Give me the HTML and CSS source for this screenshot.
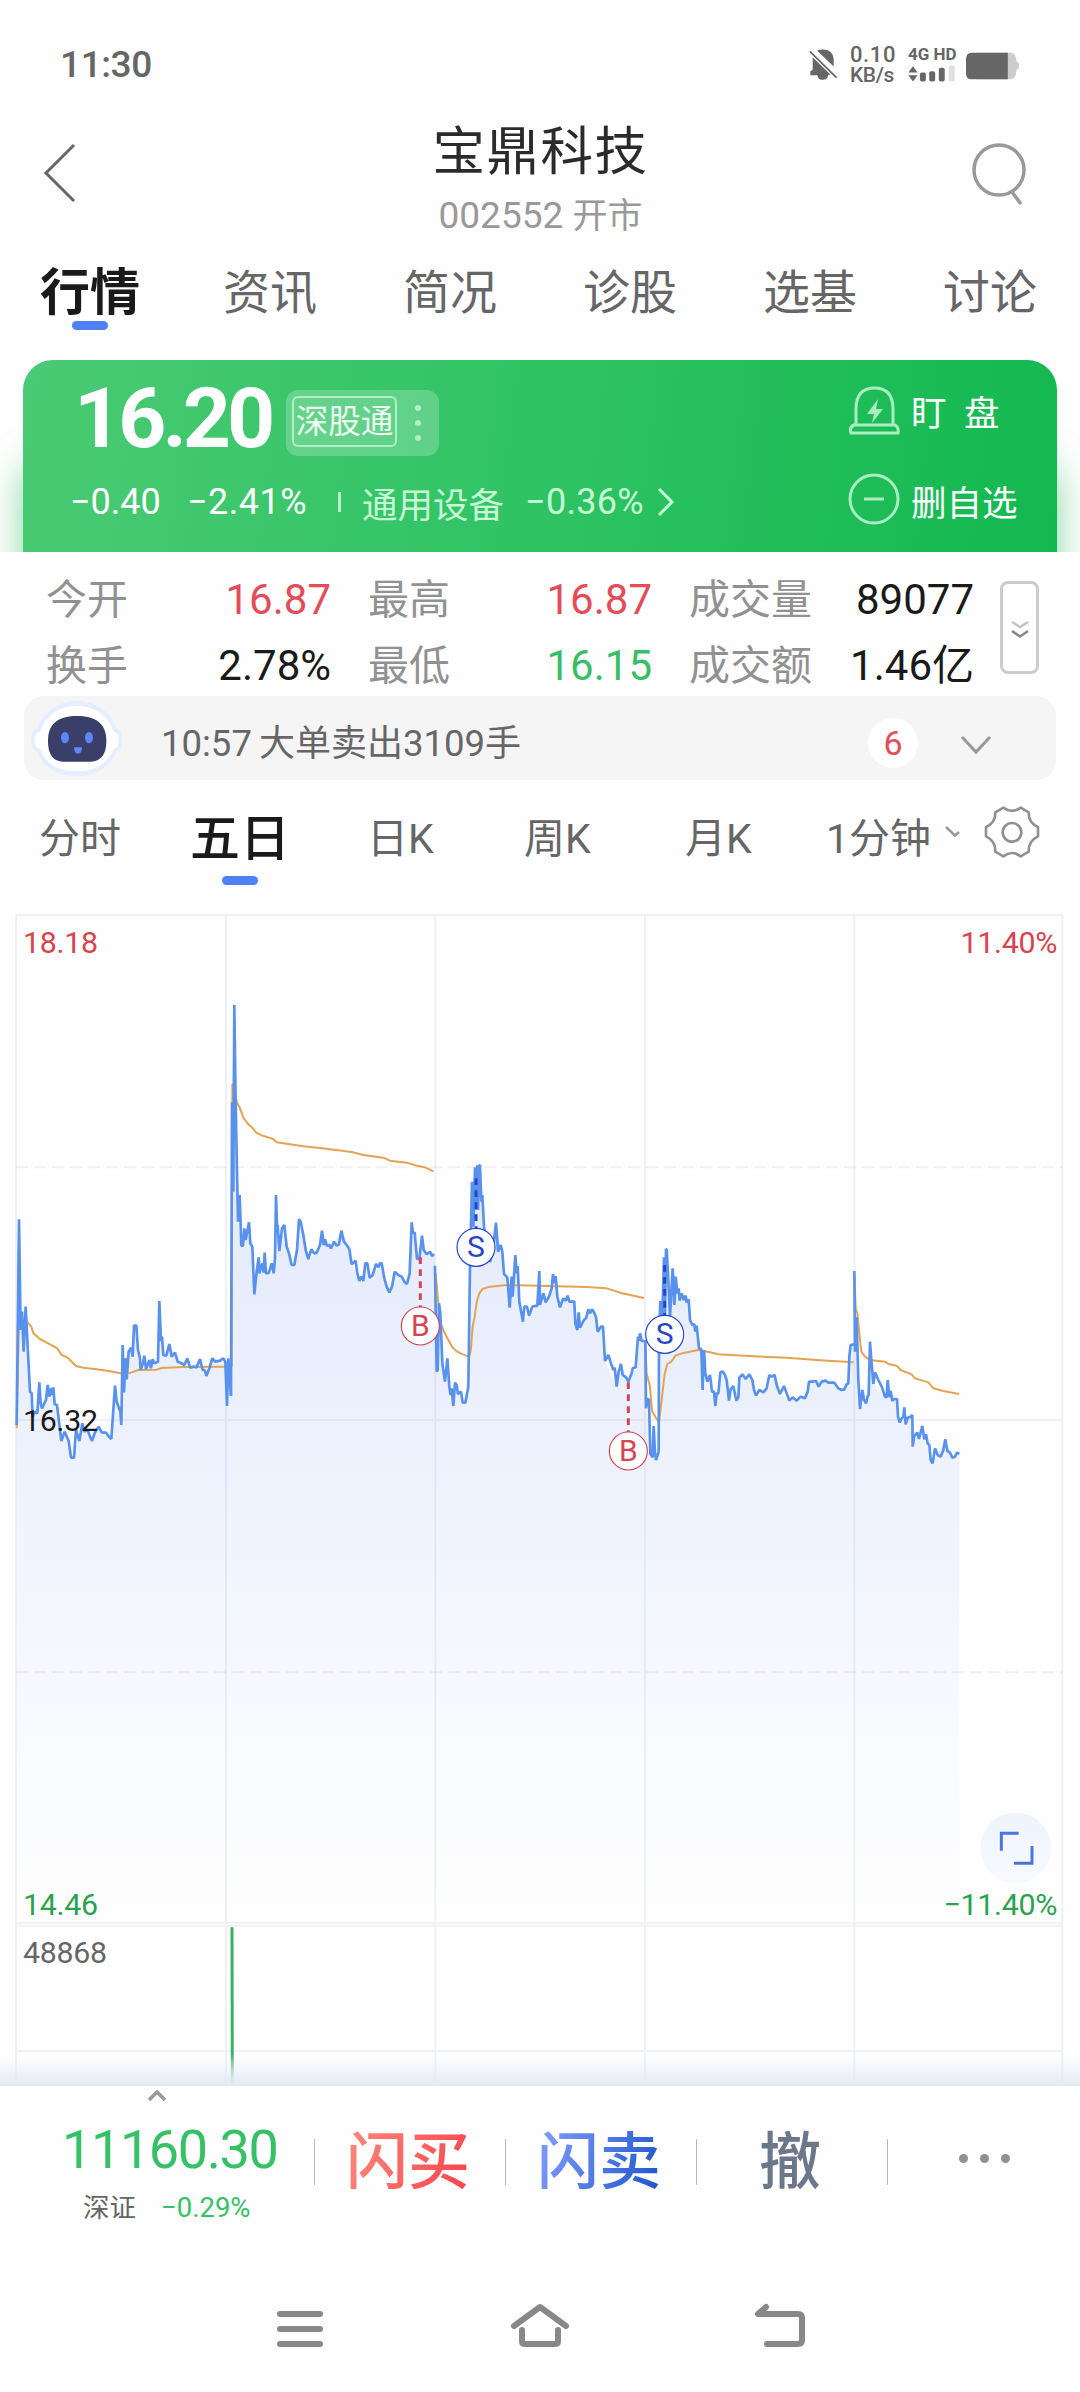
FILE: index.html
```html
<!DOCTYPE html>
<html lang="zh-CN">
<head>
<meta charset="utf-8">
<title>宝鼎科技 002552</title>
<link rel="stylesheet" href="styles.css">
</head>
<body>
<header class="status">
  <span class="clock">11:30</span>
  <div class="status-right">
    <svg class="mute" viewBox="58 55 84 98"><path fill="#666" d="M82 62 Q90 59 100 59 Q132 60 132 92 V110 Z M69 82 L123 135 H116 Q114 150 99 150 Q85 150 83 136 H62 V124 L69 120 Z"/><path stroke="#666" stroke-width="5" stroke-linecap="round" d="M62 66 L139 142"/></svg>
    <div class="speed"><span>0.10</span><span class="unit">KB/s</span></div>
    <div class="network"><span>4G HD</span>
      <svg class="signal" viewBox="357 104 142 50"><g fill="#666"><path d="M358 126 L372 107 L386 126Z M358 134 L372 153 L386 134Z"/><rect x="393" y="126" width="18" height="27" rx="6"/><rect x="421" y="122" width="18" height="31" rx="6"/><rect x="450" y="112" width="18" height="41" rx="6"/></g><rect x="480" y="105" width="18" height="48" rx="5" fill="#e0e0e0"/></svg>
    </div>
    <svg class="battery" viewBox="527 67 165 85"><path fill="#ccc" d="M560 69 H665 Q682 71 682 95 Q690 97 690 109 Q690 120 682 122 Q682 149 665 150 H560Z"/><path fill="#666" d="M656 69 V150 H546 Q529 150 529 130 V89 Q529 69 546 69Z"/></svg>
  </div>
</header>

<div class="titlebar">
  <svg class="back" viewBox="0 0 34 60"><path d="M31 2 L3 30 L31 58"/></svg>
  <div class="title"><h1>宝鼎科技</h1><p>002552 <span>开市</span></p></div>
  <svg class="search" viewBox="0 0 56 64"><circle cx="27" cy="27" r="25"/><path d="M40 49 L49 61"/></svg>
</div>

<nav class="tabs">
  <a class="active">行情</a><a>资讯</a><a>简况</a><a>诊股</a><a>选基</a><a>讨论</a>
</nav>

<div class="quote-wrap">
  <section class="quote">
    <div class="quote-main">
      <div class="price-line">
        <strong class="price">16.20</strong>
        <div class="badge"><span>深股通</span><i class="dots"><b></b><b></b><b></b></i></div>
      </div>
      <div class="change-line">
        <span class="chg">−0.40</span><span class="pct">−2.41%</span><i class="sep"></i>
        <span class="sector">通用设备</span><span class="sector-pct">−0.36%</span>
        <svg class="more" viewBox="0 0 18 30"><path d="M2 2 L15 15 L2 28"/></svg>
      </div>
    </div>
    <div class="quote-actions">
      <div class="act"><svg viewBox="0 0 52 54"><path d="M8 40 V24 Q8 3 26.500 3 Q45 3 45 24 V40 M6 40 H47 Q51 42 50 48 H3 Q1 42 6 40Z"/><path class="solid" d="M30 14 L19 29 H26 L24 38 L35 24 H28Z"/></svg><span class="watch">盯&nbsp;&nbsp;盘</span></div>
      <div class="act second"><svg viewBox="0 0 52 54"><circle cx="26" cy="26" r="24"/><path d="M16 26 H36"/></svg><span>删自选</span></div>
    </div>
  </section>
</div>

<section class="stats">
  <dl>
    <div><dt>今开</dt><dd class="up">16.87</dd></div>
    <div><dt>最高</dt><dd class="up">16.87</dd></div>
    <div><dt>成交量</dt><dd>89077</dd></div>
    <div><dt>换手</dt><dd>2.78%</dd></div>
    <div><dt>最低</dt><dd class="down">16.15</dd></div>
    <div><dt>成交额</dt><dd>1.46亿</dd></div>
  </dl>
  <div class="expander"><svg viewBox="0 0 20 20"><path stroke="#c4c4c4" d="M2 2 L10 7 L18 2"/><path stroke="#888" d="M2 11 L10 16.500 L18 11"/></svg></div>
</section>

<section class="notice">
  <svg class="robot" viewBox="30 423 276 228">
    <path fill="#e5eefe" d="M170 425 C230 427 277 462 288 508 Q307 515 307 540 Q307 570 288 580 C270 628 225 650 170 651 C115 650 70 628 52 580 Q33 570 33 540 Q33 515 52 508 C65 460 115 427 170 425Z"/>
    <path fill="#fff" d="M170 440 C228 441 270 475 281 519 Q296 519 296 541 Q296 569 281 570 C264 615 225 636 170 637 C115 636 76 615 61 570 Q43 569 43 541 Q43 519 61 519 C73 475 113 441 170 440Z"/>
    <path fill="#393f68" d="M84 545 C84 490 120 471 171 471 C222 471 259 490 259 545 C259 595 235 608 208 608 H135 C105 608 84 594 84 545Z"/>
    <ellipse cx="135" cy="536" rx="12" ry="17" fill="#5b87f8"/><ellipse cx="207" cy="536" rx="12" ry="17" fill="#5b87f8"/>
    <path fill="#5b87f8" d="M162 565 H186 Q186 584 174 584 Q163 584 162 565Z"/>
  </svg>
  <p>10:57<span>大单卖出</span>3109<span>手</span></p>
  <b class="count">6</b>
  <svg class="fold" viewBox="0 0 32 20"><path d="M2 2 L16 17 L30 2"/></svg>
</section>

<nav class="periods">
  <a class="p1">分时</a><a class="p2 active">五日</a><a class="p3">日K</a><a class="p4">周K</a><a class="p5">月K</a><a class="p6">1分钟</a>
  <svg class="caret" viewBox="0 0 16 12"><path d="M1 1 L10 9.500 L14 6"/></svg>
  <svg class="gear" viewBox="495 705 168 160"><path d="M553 712 Q579 731 605 712 L629 726 Q628 758 657 770 V798 Q628 812 629 844 L605 858 Q579 838 553 858 L529 844 Q530 812 501 798 V770 Q530 758 529 726Z"/><circle cx="579" cy="786" r="28"/></svg>
</nav>

<section class="chart">
<svg class="plot" viewBox="0 -240 3240 3558">
  <defs>
    <linearGradient id="area" gradientUnits="userSpaceOnUse" x1="0" y1="500" x2="0" y2="2830"><stop offset="0" stop-color="#4b76f5" stop-opacity=".15"/><stop offset=".4" stop-color="#4b76f5" stop-opacity=".09"/><stop offset=".8" stop-color="#4b76f5" stop-opacity=".022"/><stop offset="1" stop-color="#4b76f5" stop-opacity="0"/></linearGradient>
    <linearGradient id="area3" href="#area" gradientTransform="translate(0 -480)"/>
    <linearGradient id="area4" href="#area" gradientTransform="translate(0 -750)"/>
    <linearGradient id="circle" x1="0" x2="0" y1="0" y2="1"><stop stop-color="#eef3ff"/><stop offset="1" stop-color="#f8faff"/></linearGradient>
    <linearGradient id="vol" gradientUnits="userSpaceOnUse" x1="0" y1="3220" x2="0" y2="3318"><stop stop-color="#39b068"/><stop offset="1" stop-color="#39b068" stop-opacity=".25"/></linearGradient>
  </defs>
  <g class="areas">
    <path fill="url(#area)" d="M50 2830 V1335 L57 718 62 1050 66 995 71 1115 77 980 82 1080 90 1235 98 1310 112 1300 118 1207 126 1285 143 1215 160 1222 184 1383 194 1355 213 1433 222 1433 247 1330 276 1383 296 1340 334 1377 345 1217 364 1335 368 1095 372 1237 377 1135 393 1103 402 1037 409 1037 422 1170 474 1145 478 963 490 1125 508 1092 533 1145 570 1163 600 1137 619 1188 637 1135 676 1145 V2830Z"/>
    <path fill="url(#area)" transform="translate(660)" d="M16 2830 V1145 L33 1247 36 367 43 75 54 725 64 797 87 727 103 943 116 832 147 878 161 880 168 645 178 813 193 735 215 855 223 855 237 718 265 837 290 818 306 752 333 805 364 752 388 807 395 853 418 903 430 903 436 850 449 893 475 862 485 850 508 937 524 875 561 912 575 727 591 837 606 767 620 823 645 822 V2830Z"/>
    <path fill="url(#area3)" transform="translate(1260 480)" d="M45 2350 V377 L50 695 57 490 67 670 75 725 82 655 100 798 105 728 128 788 145 740 150 380 165 82 180 76 192 260 210 367 228 248 242 315 252 402 262 412 269 503 286 345 298 485 309 545 327 527 352 497 370 460 387 470 399 402 420 502 443 467 463 485 472 570 505 508 516 508 533 575 549 560 555 663 590 740 603 672 625 725 647 682 654 590 675 603 V2350Z"/>
    <path fill="url(#area4)" transform="translate(1920 750)" d="M16 2080 V330 L18 535 27 510 31 672 48 690 56 665 57 330 72 82 80 58 90 260 98 115 119 212 146 208 157 285 170 287 177 355 184 358 188 480 202 455 226 528 241 428 260 450 267 512 289 512 298 443 328 433 348 497 380 475 404 435 420 492 448 512 495 505 507 455 583 458 605 480 625 460 632 345 641 343 643 123 660 537 683 498 690 335 700 462 735 500 771 507 779 577 817 555 818 650 847 588 868 645 878 700 916 628 937 683 958 672 V2080Z"/>
  </g>
  <g class="grid"><path d="M48 -195 H3187 M48 1320 H3187 M48 2828 H3187 M48 2837 H3187 M48 3213 H3187 M48 -195 V3318 M678 -195 V3318 M1306 -195 V3318 M1935 -195 V3318 M2563 -195 V3318 M3187 -195 V3318"/><path stroke-dasharray="36 18" d="M48 562 H3187 M48 2077 H3187"/></g>
  <g class="average">
    <path d="M50 1345 L57 1020 78 1022 94 1040 100 1060 120 1077 150 1093 172 1105 185 1125 203 1133 228 1158 250 1163 290 1168 330 1174 362 1180 392 1178 415 1170 470 1169 485 1164 550 1161 677 1160"/>
    <path transform="translate(660)" d="M35 1160 L37 313 45 345 52 370 60 385 70 413 85 433 97 443 108 457 125 466 160 477 170 487 200 491 250 499 300 504 395 516 430 525 490 533 510 542 560 548 590 557 615 562 640 574"/>
    <path transform="translate(1260 480)" d="M47 400 L60 545 72 575 85 600 97 622 110 634 130 644 147 650 152 635 158 560 164 530 170 487 178 460 187 447 210 440 260 435 380 438 500 441 560 445 600 458 672 474"/>
    <path transform="translate(1920 750)" d="M16 340 L20 430 30 470 36 543 47 562 57 578 66 500 74 432 82 402 94 395 107 376 130 369 175 360 210 367 235 373 340 379 440 383 540 391 641 397 M643 130 L647 235 652 250 658 310 664 365 675 380 690 390 735 395 745 402 770 407 782 420 815 433 825 445 865 457 880 475 910 483 957 492"/>
  </g>
  <g class="line">
    <path d="M50 1335 L57 718 62 1050 66 995 71 1115 77 980 82 1080 90 1235 95 1240 98 1310 104 1295 112 1300 118 1207 122 1270 126 1285 138 1260 143 1215 148 1250 154 1225 157 1245 160 1222 164 1273 171 1275 184 1383 194 1355 206 1383 213 1433 222 1433 228 1350 238 1383 247 1330 253 1355 263 1350 270 1370 276 1383 285 1357 296 1340 305 1357 318 1358 325 1368 334 1377 345 1217 350 1265 361 1295 364 1335 368 1095 372 1237 377 1135 380 1198 386 1115 393 1103 398 1130 402 1037 409 1037 414 1110 420 1135 422 1170 429 1150 433 1127 438 1168 448 1140 453 1165 458 1138 463 1150 474 1145 478 963 483 1083 486 1070 490 1125 499 1127 508 1092 515 1130 525 1118 533 1145 545 1150 553 1155 562 1135 570 1163 582 1160 590 1162 600 1137 608 1170 614 1170 619 1188 628 1165 637 1135 645 1145 660 1142 670 1135 676 1145 681 1278 685 1135 693 1247"/>
    <path transform="translate(660)" d="M33 1247 L36 367 40 635 43 75 47 370 54 725 59 645 64 797 69 797 73 745 77 780 87 727 91 790 97 800 103 943 110 875 116 832 118 880 127 850 131 878 134 818 138 880 147 878 155 850 161 880 165 835 168 645 171 735 173 735 178 813 186 745 193 735 200 800 207 820 215 855 223 855 231 810 237 718 242 725 250 765 257 810 265 837 274 808 282 820 290 818 300 795 306 752 311 795 315 778 320 797 328 795 333 805 342 785 350 797 357 793 364 752 372 785 380 795 388 807 395 853 407 842 411 875 418 903 424 890 430 903 436 850 442 850 449 893 458 885 468 852 475 862 480 850 485 850 493 895 500 920 508 937 516 920 524 875 535 885 545 890 553 905 561 912 569 880 575 727 579 760 584 757 591 837 598 837 606 767 611 810 620 823 630 815 636 828 642 822"/>
    <path transform="translate(1260 480)" d="M45 377 L50 695 53 690 57 490 61 520 67 670 75 725 82 655 88 740 92 765 95 745 100 798 105 728 110 735 114 762 123 755 128 788 136 788 145 740 150 380 156 125 160 260 165 82 168 210 172 76 174 210 178 76 180 76 184 185 187 165 192 260 205 330 210 367 220 320 228 248 234 335 242 315 247 335 252 402 262 412 269 503 275 410 278 470 286 345 290 400 293 378 298 485 309 545 313 500 321 500 327 527 337 500 352 497 358 393 360 495 370 460 377 487 387 470 395 445 399 402 403 430 407 408 412 470 420 502 430 475 437 482 443 467 448 485 463 485 466 550 472 570 476 517 480 563 492 540 498 535 505 508 510 520 516 508 522 517 528 532 533 575 543 560 549 560 555 663 565 645 573 670 580 690 584 683 590 740 596 695 603 672 608 705 618 712 625 725 635 700 638 685 647 682 654 590 657 602 660 580 665 603 672 603"/>
    <path transform="translate(1920 750)" d="M16 330 L18 535 22 505 27 510 31 672 38 682 41 588 45 670 48 690 56 665 57 330 61 213 66 290 72 82 75 250 78 58 80 58 84 130 90 260 98 115 103 225 107 140 112 190 116 175 119 212 125 190 131 210 137 197 140 218 146 208 150 270 157 285 163 283 166 305 170 287 177 355 184 358 188 480 192 360 196 430 202 455 210 435 216 485 222 485 226 528 230 490 235 490 241 428 247 424 254 433 260 450 267 512 272 478 280 468 289 512 295 502 298 443 307 433 317 447 328 433 337 450 342 480 348 497 358 480 370 487 380 475 388 435 395 440 404 435 410 465 420 492 432 468 440 490 448 512 458 502 470 512 482 500 495 505 503 485 507 455 517 455 528 453 536 470 545 455 558 452 565 458 583 458 595 475 605 480 613 478 620 463 625 460 628 380 632 345 641 343 M643 123 L645 365 650 262 655 450 660 537 667 480 672 510 678 520 683 498 686 495 690 335 694 390 700 462 705 427 715 450 725 470 735 500 740 502 743 450 748 502 752 483 757 512 763 507 771 507 774 560 779 577 785 565 790 560 793 532 797 583 803 563 812 560 817 555 818 650 823 618 832 608 837 627 847 588 853 628 858 613 863 640 868 645 872 690 878 700 885 655 893 675 902 680 910 660 916 628 922 663 930 668 937 683 945 680 950 668 958 672"/>
  </g>
  <g class="mark buy"><path d="M1261 832 V981"/><circle cx="1261" cy="1038" r="57"/><text x="1261" y="1069">B</text></g>
  <g class="mark buy"><path d="M1885 1207 V1356"/><circle cx="1885" cy="1413" r="57"/><text x="1885" y="1444">B</text></g>
  <g class="mark sell"><path d="M1428 595 V745"/><circle cx="1428" cy="802" r="57"/><text x="1428" y="830">S</text></g>
  <g class="mark sell"><path d="M1994 855 V1006"/><circle cx="1994" cy="1063" r="57"/><text x="1994" y="1091">S</text></g>
  <path stroke="url(#vol)" stroke-width="9" d="M696 2842 L697 3312"/>
  <g class="labels">
    <text x="69" y="-81" fill="#d9434b">18.18</text><text x="3172" y="-81" text-anchor="end" fill="#d9434b">11.40%</text>
    <text x="69" y="1352" fill="#1a1a1a">16.32</text>
    <text x="69" y="2805" fill="#29a34e">14.46</text><text x="3172" y="2805" text-anchor="end" fill="#29a34e">−11.40%</text>
    <text x="69" y="2950" fill="#666">48868</text>
  </g>
  <circle cx="3047" cy="2604" r="106" fill="url(#circle)"/>
  <path fill="none" stroke="#4b75de" stroke-width="9" d="M3004 2612 V2560 H3056 M3096 2598 V2650 H3042"/>
</svg>
<div class="fade"></div>
</section>

<footer class="trade">
  <div class="index">
    <svg viewBox="0 0 20 12"><path d="M2 10 L10 2 L18 10"/></svg>
    <strong>11160.30</strong>
    <p><span>深证</span><em>−0.29%</em></p>
  </div>
  <div class="cell"><b class="buy-text">闪买</b></div>
  <div class="cell"><b class="sell-text">闪卖</b></div>
  <div class="cell"><b class="cancel-text">撤</b></div>
  <div class="cell last"><i></i><i></i><i></i></div>
</footer>
<div class="sysnav">
  <svg viewBox="0 0 60 48"><path d="M10 11 H50 M10 26 H50 M10 41 H50"/></svg>
  <svg viewBox="0 0 60 48"><path d="M4 23 L30 4 L56 23 M12 27 V38 Q12 41 15 41 H45 Q48 41 48 38 V27"/></svg>
  <svg viewBox="0 0 60 48"><path d="M16 4 L8 11 H48 Q52 11 52 15 V37 Q52 41 48 41 H17"/></svg>
</div>
</body>
</html>
```
FILE: styles.css
```css
* { box-sizing: border-box; margin: 0; padding: 0; }
body { width: 1080px; height: 2392px; overflow: hidden; background: #fefefe; color: #1a1a1a; font-family: Roboto, "Noto Sans CJK SC", sans-serif; }
svg { display: block; flex: none; fill: none; }
i, em { font-style: normal; }

.status { height: 118px; padding: 40px 60px 0 60px; display: flex; justify-content: space-between; color: #666; }
.clock { font-size: 37px; font-weight: 500; line-height: 50px; letter-spacing: -.4px; }
.status-right { display: flex; }
.mute { width: 28px; height: 33px; margin: 8px 13px 0 0; }
.speed { width: 46px; margin-right: 12px; padding-top: 5px; display: flex; flex-direction: column; font-size: 22px; font-weight: 500; line-height: 20px; letter-spacing: .6px; }
.speed .unit { font-size: 21px; letter-spacing: -.4px; }
.network { width: 48px; margin-right: 9px; padding-top: 5px; font-size: 17px; font-weight: 700; line-height: 19px; white-space: nowrap; }
.signal { width: 47px; height: 17px; margin-top: 1px; }
.battery { width: 55px; height: 28px; margin-top: 12px; }

.titlebar { height: 132px; padding: 0 52px 0 43px; display: flex; justify-content: space-between; align-items: flex-start; }
.back { width: 34px; height: 60px; margin-top: 25px; stroke: #666; stroke-width: 3; }
.title { width: 300px; margin-left: 32px; padding-top: 2px; text-align: center; }
.title h1 { font-size: 52.500px; line-height: 64px; font-weight: 400; color: #2b2b2b; letter-spacing: 1.5px; white-space: nowrap; }
.title p { font-size: 37px; line-height: 64px; color: #999; }
.title p span { font-size: 35px; }
.search { width: 56px; height: 64px; margin-top: 25px; stroke: #999; stroke-width: 3.500; }

.tabs { height: 110px; display: grid; grid-template-columns: repeat(6, 180px); }
.tabs a { height: 84px; padding-top: 1px; text-align: center; font-size: 47px; line-height: 84px; color: #666; }
.tabs .active, .periods .active { color: #1a1a1a; }
.tabs .active { font-size: 50px; font-weight: 700; }
.tabs .active::after, .periods .active::after { content: ""; display: block; width: 36px; height: 9px; margin: -14px auto 0; border-radius: 4.500px; background: #5080f6; }

.quote-wrap { height: 192px; padding: 0 23px; overflow: hidden; }
.quote { height: 192px; padding: 20px 0 0 47px; display: flex; border-radius: 30px 30px 0 0; background: linear-gradient(97deg, #4aca74, #2fc364 50%, #13b850); color: #fff; box-shadow: 0 100px 36px rgba(30, 184, 84, .55); }
.quote-main { width: 778px; }
.price-line { height: 90px; display: flex; align-items: flex-start; }
.price { width: 216px; padding-left: 4px; font-size: 84px; line-height: 78px; letter-spacing: -4px; white-space: nowrap; }
.badge { width: 153px; height: 66px; margin-top: 10px; padding: 6px; display: flex; border-radius: 12px; background: rgba(255, 255, 255, .22); }
.badge span { width: 105px; height: 51px; border: 2px solid #b0eec4; border-radius: 6px; font-size: 32.500px; line-height: 49px; text-align: center; color: #edfff3; white-space: nowrap; }
.dots { width: 6px; height: 36px; margin: 9px 0 0 18px; display: flex; flex-direction: column; justify-content: space-between; }
.dots b { width: 6px; height: 6px; border-radius: 50%; background: #b0eec4; }
.change-line { height: 64px; display: flex; align-items: center; font-size: 36px; white-space: nowrap; }
.chg { width: 117px; }
.pct { width: 151px; letter-spacing: .5px; }
.sep { width: 3px; height: 20px; background: #b9f7cb; }
.sector { width: 163px; margin-left: 21px; font-size: 35.500px; color: #c6fad5; }
.sector-pct { width: 132px; color: #c6fad5; letter-spacing: .3px; }
.more { width: 18px; height: 30px; stroke: #c6fad5; stroke-width: 3; }
.quote-actions { padding-top: 4px; }
.act { height: 56px; display: flex; align-items: center; font-size: 35.500px; white-space: nowrap; }
.act svg { width: 52px; height: 54px; margin-right: 11px; stroke: #a9eec1; stroke-width: 3; }
.act .solid { fill: #a9eec1; stroke: none; }
.act.second { margin-top: 32px; }
.act .watch { margin-top: -4px; }

.stats { height: 144px; padding: 15px 41px 0 46px; display: flex; justify-content: space-between; }
.stats dl { width: 928px; display: grid; grid-template-columns: 285px 284px 285px; column-gap: 37px; grid-auto-rows: 66px; }
.stats dl div { display: flex; justify-content: space-between; align-items: center; font-size: 42px; line-height: 66px; white-space: nowrap; }
.stats dt { font-size: 41px; color: #919191; }
.up { color: #e34d59; }
.down { color: #3abd67; }
.expander { width: 39px; height: 93px; margin-top: 14px; display: flex; align-items: center; justify-content: center; border: 3px solid #ccc; border-radius: 8px; }
.expander svg { width: 20px; height: 20px; margin-top: 4px; stroke-width: 2.500; }

.notice { width: 1032px; height: 84px; margin-left: 24px; padding-left: 6px; display: flex; align-items: center; border-radius: 20px; background: #f5f5f5; color: #666; }
.robot { width: 92px; height: 76px; }
.notice p { width: 706px; padding-left: 39px; font-size: 36.500px; line-height: 84px; margin-top: 12px; }
.notice p span:first-child { margin-left: 7px; }
.notice p span { font-size: 36px; }
.count { width: 50px; height: 50px; margin-top: 10px; margin-left: 40px; border-radius: 50%; background: #fff; color: #e34d59; font-size: 34px; font-weight: 400; line-height: 50px; text-align: center; }
.fold { width: 32px; height: 20px; margin: 14px 0 0 42px; stroke: #999; stroke-width: 3; }

.periods { height: 120px; padding-left: 39px; display: flex; font-size: 41px; line-height: 119px; color: #666; white-space: nowrap; }
.p1 { width: 151px; }
.periods .p2 { width: 100px; font-size: 50px; line-height: 118px; font-weight: 500; text-align: center; }
.periods .p2::after { margin-top: -22px; }
.p3 { width: 157px; margin-left: 77px; }
.p4 { width: 161px; }
.p5 { width: 141px; }
.p6 { width: 119px; }
.caret { width: 16px; height: 12px; margin-top: 46px; stroke: #999; stroke-width: 2.500; }
.gear { width: 56px; height: 54px; margin: 25px 0 0 23px; stroke: #919191; stroke-width: 8; stroke-linejoin: round; }

.chart { position: relative; height: 1186px; }
.plot { width: 1080px; height: 1186px; }
.grid { stroke: #5b70a5; stroke-opacity: .09; stroke-width: 6; }
.average { stroke: #e5a352; stroke-width: 6; stroke-linejoin: round; }
.line { stroke: #5892ed; stroke-width: 8; stroke-linejoin: bevel; }
.mark path { stroke-width: 9; stroke-dasharray: 20 16; }
.mark circle { fill: #fff; stroke-width: 3.500; }
.mark text { font-size: 90px; text-anchor: middle; stroke: none; }
.buy { stroke: #d84453; }
.buy text { fill: #d84453; }
.sell { stroke: #2544ca; }
.sell text { fill: #2544ca; }
.labels { font-size: 91px; letter-spacing: -.8px; }
.fade { position: absolute; left: 0; right: 0; bottom: 0; height: 30px; background: linear-gradient(rgba(228, 234, 243, 0), #e4eaf3); }

.trade { height: 184px; display: flex; }
.index { width: 314px; color: #36c166; }
.index svg { width: 20px; height: 12px; margin: 4px 0 0 147px; stroke: #999; stroke-width: 3.500; }
.index strong { display: block; margin: 15px 0 0 62px; font-size: 54px; font-weight: 400; line-height: 66px; letter-spacing: -1.4px; }
.index p { padding-left: 83px; display: flex; align-items: center; font-size: 27.500px; line-height: 50px; }
.index p span { width: 78px; font-size: 26.500px; color: #666; }
.cell { width: 191px; display: flex; }
.cell::before { content: ""; width: 1px; height: 46px; margin-top: 53px; background: #bbb; }
.cell b { width: 186px; text-align: center; font-size: 62px; line-height: 154px; font-weight: 500; }
.buy-text { background: linear-gradient(110deg, #fb8277 25%, #fb4950 70%); background-clip: text; color: transparent; }
.sell-text { background: linear-gradient(110deg, #7897f7 25%, #1f57cc 75%); background-clip: text; color: transparent; }
.cancel-text { color: #6d778b; }
.cell.last { gap: 12px; }
.cell.last::before { margin-right: 59px; }
.cell.last i { width: 9px; height: 9px; margin-top: 68px; border-radius: 50%; background: #919191; }

.sysnav { height: 122px; padding: 33px 270px 0; display: flex; justify-content: space-between; }
.sysnav svg { width: 60px; height: 48px; stroke: #888; stroke-width: 6; stroke-linecap: round; stroke-linejoin: round; }
```
